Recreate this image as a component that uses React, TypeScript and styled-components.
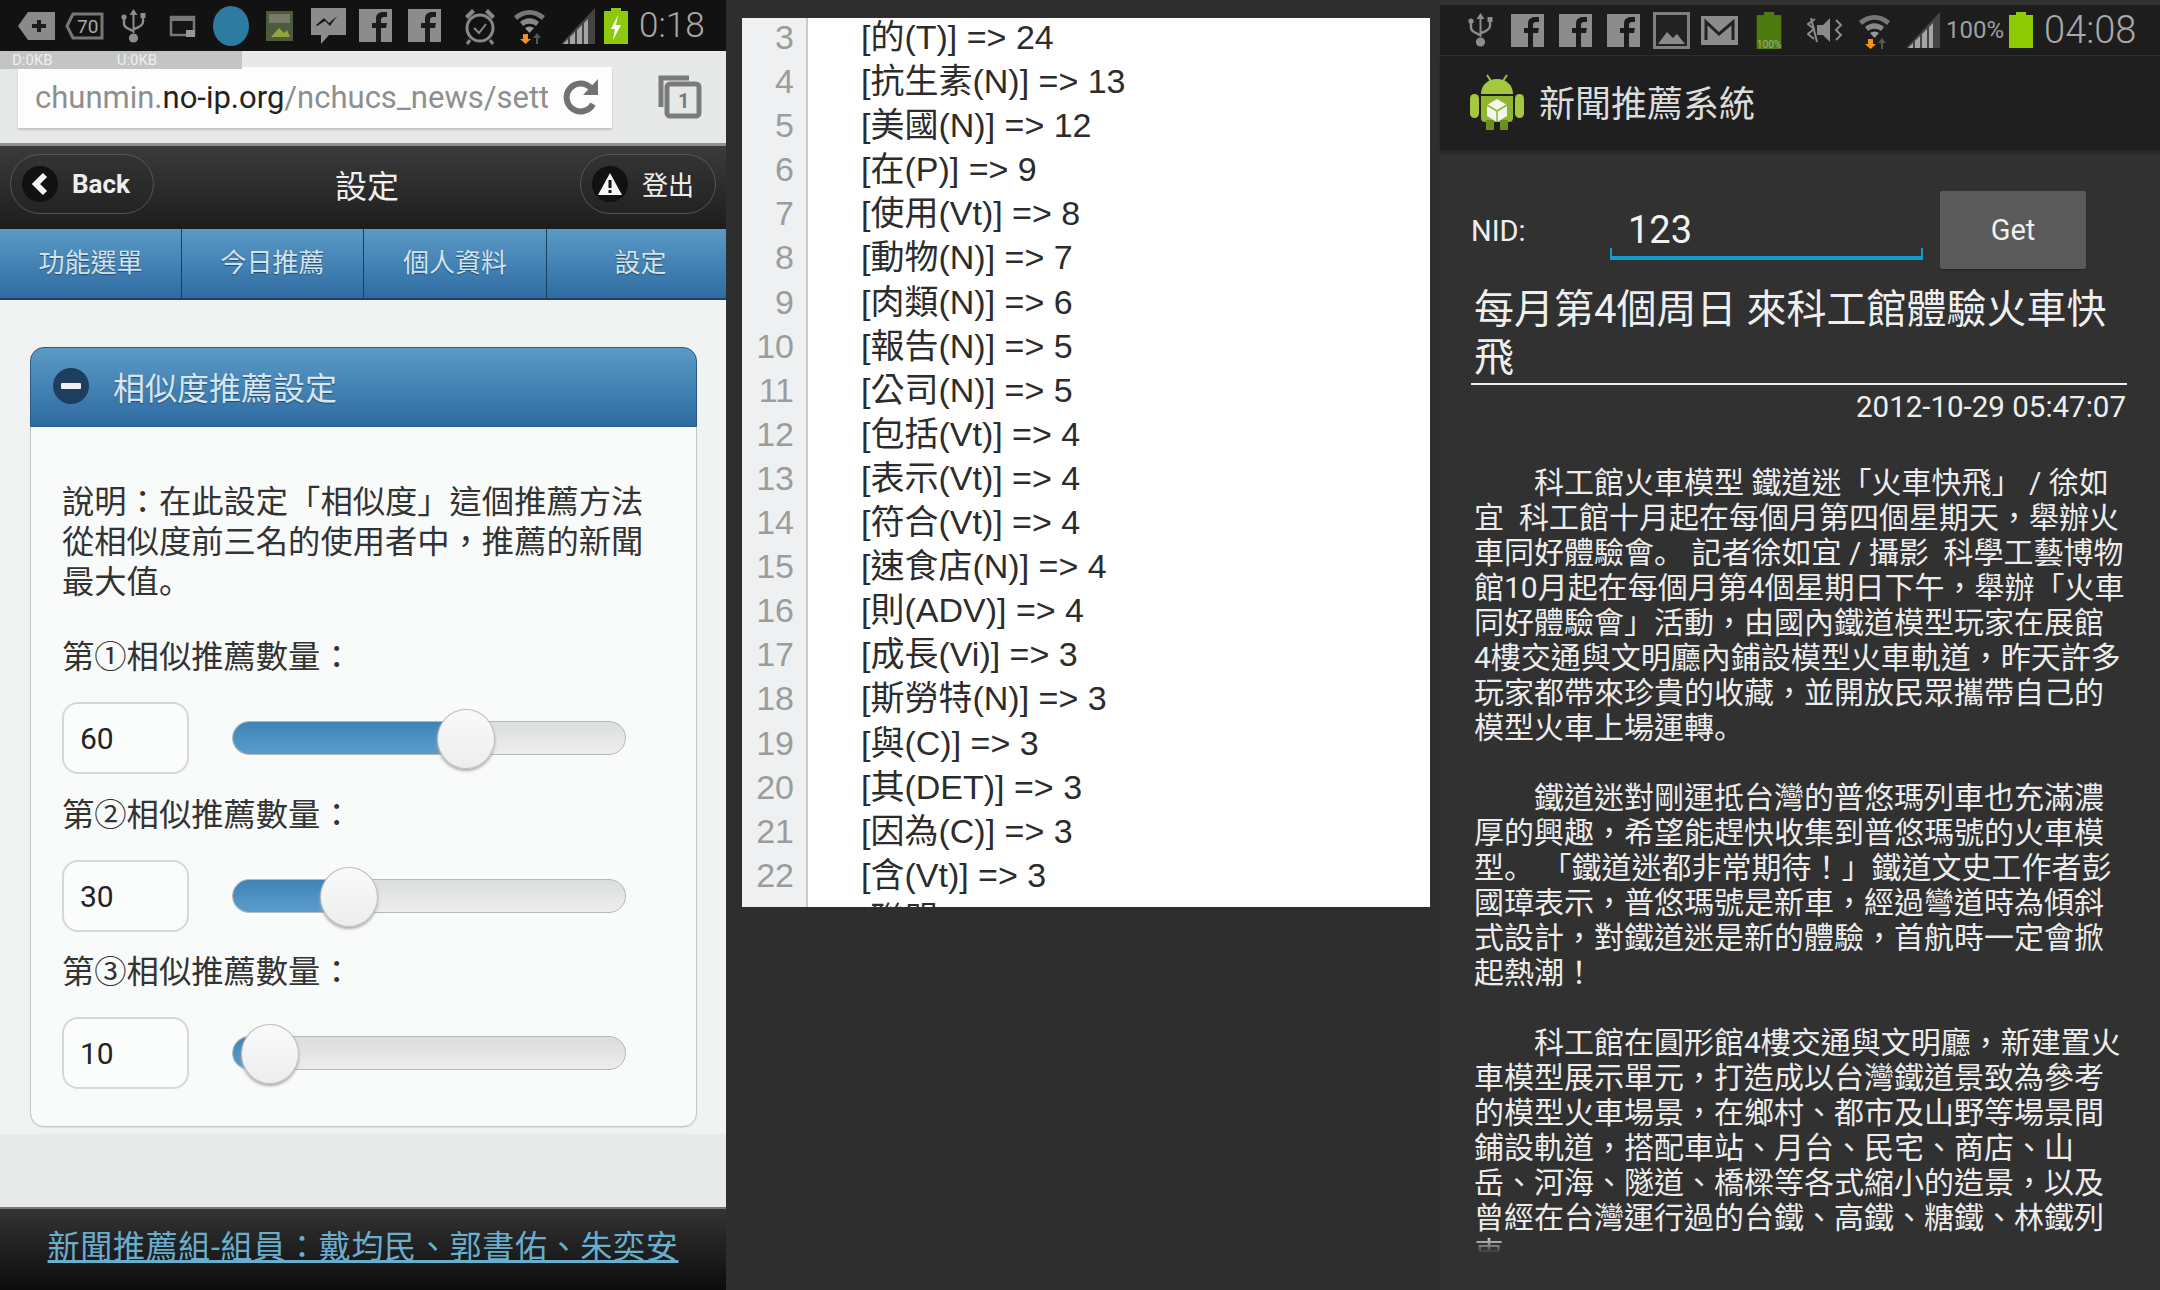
import React, { FC } from 'react';
import styled, { createGlobalStyle } from 'styled-components';

const GlobalStyle = createGlobalStyle`
    html, body {
        margin: 0;
        padding: 0;
        background: #2e2e2e;
    }
    * {
        box-sizing: border-box;
    }
`;

const fontStack = `Roboto, "Noto Sans CJK TC", sans-serif`;

const Page = styled.div`
    display: flex;
    width: 2160px;
    height: 1290px;
    overflow: hidden;
    background: #2e2e2e;
    font-family: ${fontStack};
`;

// the reference's fallback font sets the full stop low and to the left
const Stop = styled.span`
    font-family: "Noto Sans CJK SC", sans-serif;
    line-height: 0;
`;

const withStops = (text: string) =>
    text.split('\u3002').map((part, i) => (
        <React.Fragment key={i}>
            {i > 0 && <Stop>{'\u3002'}</Stop>}
            {part}
        </React.Fragment>
    ));

/* ---------- shared status bar parts ---------- */

const StatusBar = styled.div<{ $bg: string; $height: number; $pad: number }>`
    display: flex;
    align-items: center;
    flex-shrink: 0;
    height: ${(p) => p.$height}px;
    padding-left: ${(p) => p.$pad}px;
    background: ${(p) => p.$bg};
`;

const Slot = styled.span<{ $left: number }>`
    display: flex;
    align-items: center;
    margin-left: ${(p) => p.$left}px;
`;

const StatusClock = styled.span<{ $size: number; $left: number }>`
    margin-left: ${(p) => p.$left}px;
    font-size: ${(p) => p.$size}px;
    font-weight: 300;
    color: #a9a9a9;
    line-height: 1;
`;

const StatusPercent = styled.span`
    margin-left: 6px;
    font-size: 24px;
    color: #a0a0a0;
`;

const FbIcon: FC = () => (
    <svg width="33" height="33" viewBox="0 0 33 33">
        <rect width="33" height="33" fill="#8c8c8c" />
        <path d="M17 33V19h-4v-5h4v-4c0-5 3-7 7-7h4v5h-3c-2 0-3 1-3 3v3h6l-1 5h-5v14z" fill="#1b1b1b" />
    </svg>
);

const UsbIcon: FC = () => (
    <svg width="25" height="36" viewBox="0 0 25 36">
        <path d="M12.5 1l4 6h-3v17c0 1-.5 1-1 1s-1 0-1-1V7h-3z" fill="#8d8d8d" />
        <path d="M3 11v5c0 3 3 4 9 7M22 9v5c0 3-3 5-9 7" stroke="#8d8d8d" strokeWidth="2.4" fill="none" />
        <circle cx="3" cy="9" r="2.6" fill="#8d8d8d" />
        <rect x="19.5" y="5" width="5" height="5" fill="#8d8d8d" />
        <circle cx="12.5" cy="30" r="4.6" fill="#8d8d8d" />
    </svg>
);

const WifiIcon: FC = () => (
    <svg width="33" height="37" viewBox="0 0 33 37">
        <path d="M1 9C10 1 23 1 32 9l-3 4C21 6 12 6 4 13z" fill="#777" />
        <path d="M7 15c6-5 13-5 19 0l-3 4c-4-3-9-3-13 0z" fill="#888" />
        <path d="M12 21c3-2 6-2 9 0l-4.500 5z" fill="#999" />
        <path d="M10 27h5v5h3l-5.500 5L7 32h3z" fill="#f0941f" />
        <path d="M23 37v-6h-3l4-5 4 5h-3v6z" fill="#555" />
    </svg>
);

const SignalIcon: FC = () => (
    <svg width="34" height="36" viewBox="0 0 34 36">
        <path d="M0 36L34 0v36z" fill="#444" />
        <path d="M2 36l5-5v5zM9 36V29l5-5v12zM16 36V22l5-5v19zM23 36V15l4-4v25z" fill="#a5a5a5" />
    </svg>
);

const BatteryIcon: FC<{ bolt?: boolean; label?: boolean; color: string; width: number; height: number }> = ({ bolt, label, color, width, height }) => (
    <svg width={width} height={height} viewBox="0 0 24 36">
        <rect x="7" y="0" width="10" height="4" fill={color} />
        <rect x="0" y="3" width="24" height="33" fill={color} />
        {bolt && <path d="M14 7l-7 14h4l-2 11 8-15h-5z" fill="#fff" />}
        {label && <text x="0" y="35" fontSize="10" fill="#9fb07f" fontFamily="Roboto, sans-serif">100%</text>}
    </svg>
);

const LeftStatus: FC = () => (
    <StatusBar $bg="#121212" $height={51} $pad={18}>
        <svg width="37" height="28" viewBox="0 0 37 28">
            <path d="M10 0h27v28H10L0 14z" fill="#8a8a8a" />
            <path d="M19 8h4v4h5v4h-5v4h-4v-4h-5v-4h5z" fill="#1c1c1c" />
        </svg>
        <Slot $left={10}>
            <svg width="39" height="28" viewBox="0 0 39 28">
                <path d="M8 2h29v24H8L2 14z" fill="none" stroke="#777" strokeWidth="3" />
                <text x="12" y="21" fontSize="19" fill="#aaa" fontFamily="Roboto, sans-serif">70</text>
            </svg>
        </Slot>
        <Slot $left={17}><UsbIcon /></Slot>
        <Slot $left={23}>
            <svg width="27" height="30" viewBox="0 0 27 30">
                <path d="M2 6h23v18H2z" fill="#151515" stroke="#777" strokeWidth="2.500" />
                <rect x="2" y="5" width="23" height="5" fill="#777" />
                <rect x="17" y="19" width="9" height="7" fill="#999" />
            </svg>
        </Slot>
        <Slot $left={17}>
            <svg width="36" height="40" viewBox="0 0 36 40">
                <ellipse cx="18" cy="20" rx="18" ry="20" fill="#2d7ba0" />
            </svg>
        </Slot>
        <Slot $left={17}>
            <svg width="27" height="30" viewBox="0 0 27 30">
                <rect width="27" height="30" fill="#4d5a3c" />
                <rect x="3" y="3" width="21" height="9" fill="#7a7a6a" />
                <path d="M5 26l8-9 5 5 3-3 3 7z" fill="#93a33e" />
            </svg>
        </Slot>
        <Slot $left={18}>
            <svg width="35" height="36" viewBox="0 0 35 36">
                <path d="M0 0h35v27H18l-8 9v-9H0z" fill="#8c8c8c" />
                <path d="M5 17l8-7 5 5 8-7-7 10-5-5-8 5z" fill="#1b1b1b" />
            </svg>
        </Slot>
        <Slot $left={13}><FbIcon /></Slot>
        <Slot $left={16}><FbIcon /></Slot>
        <Slot $left={22}>
            <svg width="34" height="38" viewBox="0 0 34 38">
                <circle cx="17" cy="21" r="13" fill="none" stroke="#888" strokeWidth="3" />
                <path d="M11 21l5 5 7-9" fill="none" stroke="#888" strokeWidth="2" />
                <path d="M2 9l7-7 3 3-7 7zM32 9l-7-7-3 3 7 7z" fill="#888" />
                <path d="M7 33l-3 4M27 33l3 4" stroke="#888" strokeWidth="3" />
            </svg>
        </Slot>
        <Slot $left={16}><WifiIcon /></Slot>
        <Slot $left={15}><SignalIcon /></Slot>
        <Slot $left={9}><BatteryIcon bolt color="#8ec90d" width={24} height={38} /></Slot>
        <StatusClock $size={35} $left={11}>0:18</StatusClock>
    </StatusBar>
);

/* ---------- left: mobile web settings page ---------- */

const Phone = styled.div`
    display: flex;
    flex-direction: column;
    flex-shrink: 0;
    position: relative;
    width: 726px;
    height: 1290px;
    background: #eff1f0;
`;

const BrowserBar = styled.div`
    display: flex;
    align-items: center;
    height: 95px;
    padding: 6px 24px 6px 18px;
    background: #e7e8e8;
    border-bottom: 3px solid #8f9292;
`;

const NetOverlay = styled.div`
    position: absolute;
    top: 51px;
    left: 0;
    display: flex;
    width: 242px;
    height: 18px;
    padding-left: 12px;
    gap: 64px;
    background: #c3c4c4;
    color: #eee;
    font-size: 15px;
    line-height: 18px;
`;

const UrlBox = styled.div`
    display: flex;
    align-items: center;
    flex-shrink: 0;
    width: 594px;
    height: 61px;
    padding-left: 17px;
    background: #fdfdfd;
    box-shadow: 0 2px 2px #c2c2c2;
`;

const UrlText = styled.div`
    flex-shrink: 0;
    width: 513px;
    margin-right: 15px;
    overflow: hidden;
    white-space: nowrap;
    font-size: 31px;
    color: #8d8f8f;
    span {
        color: #222;
    }
`;

const TabsButton = styled.div`
    margin-left: 44px;
    line-height: 0;
`;

const AppHeader = styled.div`
    display: flex;
    align-items: center;
    justify-content: space-between;
    height: 83px;
    padding: 0 10px 8px;
    background: linear-gradient(#3b3b3b, #1d1d1d);
`;

const HeaderTitle = styled.div`
    font-size: 32px;
    color: #f0f0f0;
`;

const HeaderButton = styled.div<{ $width: number; $bold?: boolean }>`
    display: flex;
    align-items: center;
    gap: 14px;
    width: ${(p) => p.$width}px;
    height: 60px;
    padding-left: 11px;
    border-radius: 30px;
    border: 1px solid #555;
    background: linear-gradient(#333, #232323);
    font-size: 26px;
    font-weight: ${(p) => (p.$bold ? 700 : 400)};
    color: #eee;
`;

const ButtonIcon = styled.span`
    display: flex;
    align-items: center;
    justify-content: center;
    width: 36px;
    height: 36px;
    border-radius: 50%;
    background: #111;
`;

const NavBar = styled.div`
    display: grid;
    grid-template-columns: 182px 182px 183px 179px;
    height: 71px;
    border-bottom: 2px solid #23415e;
    background: linear-gradient(#5a9ac6, #2f6ca3);
`;

const NavItem = styled.div`
    display: flex;
    align-items: center;
    justify-content: center;
    padding-bottom: 6px;
    border-right: 1px solid #1d3e5c;
    font-size: 26px;
    color: #d3e3ee;
    text-shadow: 0 1px 1px #234a6c;
    &:last-child {
        padding-left: 8px;
        border-right: none;
    }
`;

const PageContent = styled.div`
    flex: 1;
    padding: 47px 29px 0 30px;
    background: linear-gradient(#f1f3f2 0, #f1f3f2 92%, #e8eaea 92%);
`;

const Collapsible = styled.div`
    border: 1px solid #c3c7c7;
    border-radius: 14px;
    background: #f9fbfa;
    box-shadow: 0 1px 1px #ddd;
`;

const CollapsibleHead = styled.div`
    display: flex;
    align-items: center;
    height: 80px;
    margin: -1px;
    padding: 0 0 2px 22px;
    gap: 24px;
    border-radius: 14px 14px 0 0;
    border: 1px solid #2b5a85;
    background: linear-gradient(#5b9ac6, #2e6ba2);
    font-size: 32px;
    color: #d6e7f2;
    text-shadow: 0 1px 1px #234a6c;
`;

const MinusBadge = styled.span`
    display: flex;
    align-items: center;
    justify-content: center;
    width: 36px;
    height: 36px;
    border-radius: 50%;
    background: #1f3d5e;
    &::after {
        content: '';
        width: 20px;
        height: 6px;
        border-radius: 1px;
        background: #f1f1f1;
    }
`;

const CollapsibleBody = styled.div`
    padding: 56px 31px 37px 31px;
    font-size: 32.3px;
    line-height: 40px;
    color: #333;
`;

const SliderLabel = styled.div<{ $top: number }>`
    margin-top: ${(p) => p.$top}px;
    white-space: pre;
`;

const SliderRow = styled.div`
    display: flex;
    align-items: center;
    margin-top: 25px;
`;

const NumberBox = styled.div`
    display: flex;
    align-items: center;
    width: 127px;
    height: 72px;
    padding: 2px 0 0 16px;
    border: 2px solid #d6d8d8;
    border-radius: 16px;
    background: #fbfcfc;
    font-size: 30px;
    color: #222;
`;

const Track = styled.div`
    position: relative;
    width: 394px;
    height: 34px;
    margin-left: 43px;
    border: 1px solid #b5b8b8;
    border-radius: 17px;
    background: linear-gradient(#dcdddd, #ededed);
`;

const TrackFill = styled.div`
    height: 100%;
    border-radius: 17px 0 0 17px;
    background: linear-gradient(#3f83b7, #5a9dcc);
`;

const Thumb = styled.div`
    position: absolute;
    top: -13px;
    width: 58px;
    height: 60px;
    margin-left: -31px;
    border: 1px solid #bcbfbf;
    border-radius: 50%;
    background: linear-gradient(#fafafa, #eceded);
    box-shadow: 0 2px 3px #aaa;
`;

const Footer = styled.div`
    display: flex;
    align-items: flex-start;
    justify-content: center;
    height: 83px;
    padding-top: 12px;
    border-top: 2px solid #777;
    background: linear-gradient(#333, #0c0c0c);
    font-size: 32px;
    letter-spacing: 0.7px;
    color: #6aaecd;
    text-decoration: underline;
    white-space: pre;
`;

const sliders = [
    { label: '第①相似推薦數量\uFF1A', value: 60, top: 35 },
    { label: '第②相似推薦數量\uFF1A', value: 30, top: 21 },
    { label: '第③相似推薦數量\uFF1A', value: 10, top: 20 },
];

const SettingsPhone: FC = () => (
    <Phone>
        <LeftStatus />
        <BrowserBar>
            <UrlBox>
                <UrlText>chunmin.<span>no-ip.org</span>/nchucs_news/settings</UrlText>
                <svg width="36" height="40" viewBox="0 0 36 40">
                    <path d="M30 27a14 14 0 1 1-2-16" fill="none" stroke="#707272" strokeWidth="6" />
                    <path d="M35 2v16H20z" fill="#707272" />
                </svg>
            </UrlBox>
            <TabsButton>
                <svg width="46" height="44" viewBox="0 0 46 44">
                    <path d="M5 32V3h28" fill="none" stroke="#7a7c7c" strokeWidth="5" />
                    <rect x="11" y="9" width="32" height="32" rx="3" fill="#e7e8e8" stroke="#7a7c7c" strokeWidth="5" />
                    <text x="22" y="33" fontSize="20" fontWeight="700" fill="#7a7c7c" fontFamily="Roboto, sans-serif">1</text>
                </svg>
            </TabsButton>
        </BrowserBar>
        <NetOverlay><span>D:0KB</span><span>U:0KB</span></NetOverlay>
        <AppHeader>
            <HeaderButton $width={144} $bold>
                <ButtonIcon>
                    <svg width="18" height="24" viewBox="0 0 18 24">
                        <path d="M14 3L5 12l9 9" fill="none" stroke="#f4f4f4" strokeWidth="6" />
                    </svg>
                </ButtonIcon>
                Back
            </HeaderButton>
            <HeaderTitle>設定</HeaderTitle>
            <HeaderButton $width={136}>
                <ButtonIcon>
                    <svg width="26" height="24" viewBox="0 0 26 24">
                        <path d="M13 1l12 22H1z" fill="#f4f4f4" />
                        <rect x="11.500" y="8" width="3" height="8" fill="#111" />
                        <rect x="11.500" y="18" width="3" height="3" fill="#111" />
                    </svg>
                </ButtonIcon>
                登出
            </HeaderButton>
        </AppHeader>
        <NavBar>
            <NavItem>功能選單</NavItem>
            <NavItem>今日推薦</NavItem>
            <NavItem>個人資料</NavItem>
            <NavItem>設定</NavItem>
        </NavBar>
        <PageContent>
            <Collapsible>
                <CollapsibleHead><MinusBadge />相似度推薦設定</CollapsibleHead>
                <CollapsibleBody>
                    <div>
                        {'說明\uFF1A在此設定「相似度」這個推薦方法'}<br />
                        {'從相似度前三名的使用者中\uFF0C推薦的新聞'}<br />
                        {withStops('最大值。')}
                    </div>
                    {sliders.map((s) => (
                        <React.Fragment key={s.value}>
                            <SliderLabel $top={s.top}>{s.label}</SliderLabel>
                            <SliderRow>
                                <NumberBox>{s.value}</NumberBox>
                                <Track>
                                    <TrackFill style={{ width: `${s.value}%` }} />
                                    <Thumb style={{ left: `${s.value}%` }} />
                                </Track>
                            </SliderRow>
                        </React.Fragment>
                    ))}
                </CollapsibleBody>
            </Collapsible>
        </PageContent>
        <Footer>{'新聞推薦組-組員\uFF1A戴均民、郭書佑、朱奕安'}</Footer>
    </Phone>
);

/* ---------- middle: term count listing ---------- */

const Listing = styled.div`
    flex-shrink: 0;
    width: 688px;
    height: 889px;
    margin: 18px 0 0 16px;
    overflow: hidden;
    background: #fff;
    font-family: "Liberation Sans", "Noto Sans CJK TC", sans-serif;
`;

const ListingRows = styled.div`
    margin-top: -3px;
`;

const ListingRow = styled.div`
    display: flex;
    height: 44.1px;
    line-height: 44.1px;
`;

const LineNumber = styled.div`
    width: 66px;
    padding-right: 12px;
    flex-shrink: 0;
    text-align: right;
    background: #eef0f1;
    border-right: 2px solid #c9cbcb;
    font-size: 34px;
    color: #9b9d9d;
`;

const Term = styled.div`
    padding-left: 53px;
    font-size: 34px;
    color: #2c2c2c;
    white-space: pre;
`;

const terms = [
    '[的(T)] => 24',
    '[抗生素(N)] => 13',
    '[美國(N)] => 12',
    '[在(P)] => 9',
    '[使用(Vt)] => 8',
    '[動物(N)] => 7',
    '[肉類(N)] => 6',
    '[報告(N)] => 5',
    '[公司(N)] => 5',
    '[包括(Vt)] => 4',
    '[表示(Vt)] => 4',
    '[符合(Vt)] => 4',
    '[速食店(N)] => 4',
    '[則(ADV)] => 4',
    '[成長(Vi)] => 3',
    '[斯勞特(N)] => 3',
    '[與(C)] => 3',
    '[其(DET)] => 3',
    '[因為(C)] => 3',
    '[含(Vt)] => 3',
    '[聯盟(N)] => 3',
];

/* ---------- right: native news app ---------- */

const NewsApp = styled.div`
    display: flex;
    flex-direction: column;
    flex-shrink: 0;
    position: relative;
    width: 720px;
    height: 1290px;
    margin-left: 10px;
    padding-top: 5px;
    background: #313131;
`;

const ActionBar = styled.div`
    display: flex;
    align-items: center;
    gap: 15px;
    height: 95px;
    padding: 0 0 4px 30px;
    border-top: 1px solid #2e2e2e;
    background: #1f1f1f;
    box-shadow: 0 3px 3px #262626;
    font-size: 36px;
    color: #dcdcdc;
`;

const FetchRow = styled.div`
    display: flex;
    align-items: flex-start;
    margin-top: 41px;
    padding-left: 31px;
`;

const NidLabel = styled.div`
    width: 139px;
    margin-top: 25px;
    font-size: 29px;
    line-height: 30px;
    color: #eee;
`;

const NidInput = styled.div`
    position: relative;
    width: 313px;
    height: 69px;
    padding: 17px 0 0 18px;
    border-bottom: 4px solid #139bcb;
    font-size: 38px;
    line-height: 44px;
    color: #f2f2f2;
    &::before, &::after {
        content: '';
        position: absolute;
        bottom: 0;
        width: 2px;
        height: 8px;
        background: #139bcb;
    }
    &::before {
        left: 0;
    }
    &::after {
        right: 0;
    }
`;

const GetButton = styled.div`
    display: flex;
    align-items: center;
    justify-content: center;
    width: 146px;
    height: 78px;
    margin-left: 17px;
    background: #5a5a5a;
    border-radius: 2px;
    box-shadow: 0 1px 1px #222;
    font-size: 29px;
    color: #f0f0f0;
`;

const Article = styled.div`
    padding: 17px 33px 0 31px;
`;

const Headline = styled.div`
    padding: 0 0 1px 3px;
    border-bottom: 2px solid #f2f2f2;
    font-size: 40px;
    line-height: 48px;
    color: #efefef;
    white-space: pre;
`;

const Timestamp = styled.div`
    margin-top: 3px;
    padding-right: 1px;
    text-align: right;
    font-size: 29.5px;
    line-height: 38px;
    color: #efefef;
`;

const BodyClip = styled.div`
    position: relative;
    height: 788px;
    margin-top: 39px;
    overflow: hidden;
    &::after {
        content: '';
        position: absolute;
        left: 0;
        right: 0;
        bottom: 0;
        height: 14px;
        background: linear-gradient(rgba(49, 49, 49, 0.2), #313131);
    }
`;

const BodyLine = styled.div<{ $indent?: boolean }>`
    height: 35px;
    padding-left: ${(p) => (p.$indent ? 63 : 3)}px;
    font-size: 30px;
    line-height: 35px;
    color: #ececec;
    white-space: pre;
`;

const article = [
    '>科工館火車模型 鐵道迷「火車快飛」 / 徐如',
    '宜  科工館十月起在每個月第四個星期天\uFF0C舉辦火',
    '車同好體驗會。 記者徐如宜 / 攝影  科學工藝博物',
    '館10月起在每個月第4個星期日下午\uFF0C舉辦「火車',
    '同好體驗會」活動\uFF0C由國內鐵道模型玩家在展館',
    '4樓交通與文明廳內鋪設模型火車軌道\uFF0C昨天許多',
    '玩家都帶來珍貴的收藏\uFF0C並開放民眾攜帶自己的',
    '模型火車上場運轉。',
    '',
    '>鐵道迷對剛運抵台灣的普悠瑪列車也充滿濃',
    '厚的興趣\uFF0C希望能趕快收集到普悠瑪號的火車模',
    '型。 「鐵道迷都非常期待\uFF01」鐵道文史工作者彭',
    '國璋表示\uFF0C普悠瑪號是新車\uFF0C經過彎道時為傾斜',
    '式設計\uFF0C對鐵道迷是新的體驗\uFF0C首航時一定會掀',
    '起熱潮\uFF01',
    '',
    '>科工館在圓形館4樓交通與文明廳\uFF0C新建置火',
    '車模型展示單元\uFF0C打造成以台灣鐵道景致為參考',
    '的模型火車場景\uFF0C在鄉村、都市及山野等場景間',
    '鋪設軌道\uFF0C搭配車站、月台、民宅、商店、山',
    '岳、河海、隧道、橋樑等各式縮小的造景\uFF0C以及',
    '曾經在台灣運行過的台鐵、高鐵、糖鐵、林鐵列',
    '車',
];

const RightStatus: FC = () => (
    <StatusBar $bg="#1d1d1d" $height={50} $pad={28}>
        <UsbIcon />
        <Slot $left={18}><FbIcon /></Slot>
        <Slot $left={15}><FbIcon /></Slot>
        <Slot $left={15}><FbIcon /></Slot>
        <Slot $left={13}>
            <svg width="37" height="37" viewBox="0 0 37 37">
                <rect x="1.500" y="1.500" width="34" height="34" fill="#222" stroke="#808080" strokeWidth="3" />
                <path d="M5 32l9-12 6 6 4-4 8 10z" fill="#8a8a8a" />
            </svg>
        </Slot>
        <Slot $left={11}>
            <svg width="37" height="29" viewBox="0 0 37 29">
                <rect width="37" height="29" fill="#8c8c8c" />
                <path d="M5 24V6l13 12L32 6v18" fill="none" stroke="#222" strokeWidth="3" />
            </svg>
        </Slot>
        <Slot $left={18}><BatteryIcon label color="#4f7a10" width={26} height={37} /></Slot>
        <Slot $left={25}>
            <svg width="38" height="28" viewBox="0 0 38 28">
                <path d="M10 9h6l7-7v24l-7-7h-6z" fill="#8a8a8a" />
                <path d="M4 2l6 24M8 3L1 8l6 5-6 5 6 5M29 4l5 5-5 5 5 5-5 5" fill="none" stroke="#8a8a8a" strokeWidth="2" />
            </svg>
        </Slot>
        <Slot $left={13}><WifiIcon /></Slot>
        <Slot $left={15}><SignalIcon /></Slot>
        <StatusPercent>100%</StatusPercent>
        <Slot $left={5}><BatteryIcon color="#8ecb05" width={24} height={36} /></Slot>
        <StatusClock $size={38} $left={11}>04:08</StatusClock>
    </StatusBar>
);

const NewsReader: FC = () => (
    <NewsApp>
        <RightStatus />
        <ActionBar>
            <svg width="54" height="58" viewBox="0 0 54 58">
                <path d="M17 3l4 6M37 3l-4 6" stroke="#9cc43a" strokeWidth="2" />
                <path d="M11 22c0-9 7-15 16-15s16 6 16 15z" fill="#a4c83f" />
                <path d="M11 24h32v22c0 3-2 4-4 4H15c-2 0-4-1-4-4z" fill="#8fb62f" />
                <rect x="0" y="22" width="9" height="24" rx="4.500" fill="#a4c83f" />
                <rect x="45" y="22" width="9" height="24" rx="4.500" fill="#a4c83f" />
                <rect x="16" y="48" width="8" height="10" fill="#6d8f22" />
                <rect x="30" y="48" width="8" height="10" fill="#6d8f22" />
                <path d="M27 27l10 6v11l-10 6-10-6V33z" fill="#f4f4ee" />
                <path d="M27 39l10-6M27 39l-10-6M27 39v11" stroke="#8fb62f" strokeWidth="1.500" />
            </svg>
            新聞推薦系統
        </ActionBar>
        <FetchRow>
            <NidLabel>NID:</NidLabel>
            <NidInput>123</NidInput>
            <GetButton>Get</GetButton>
        </FetchRow>
        <Article>
            <Headline>每月第4個周日 來科工館體驗火車快{'\n'}飛</Headline>
            <Timestamp>2012-10-29 05:47:07</Timestamp>
            <BodyClip>
                {article.map((line, i) => (
                    <BodyLine key={i} $indent={line.startsWith('>')}>{withStops(line.replace('>', ''))}</BodyLine>
                ))}
            </BodyClip>
        </Article>
    </NewsApp>
);

const App: FC = () => (
    <Page>
        <GlobalStyle />
        <SettingsPhone />
        <Listing>
            <ListingRows>
                {terms.map((term, i) => (
                    <ListingRow key={term}>
                        <LineNumber>{i + 3}</LineNumber>
                        <Term>{term}</Term>
                    </ListingRow>
                ))}
            </ListingRows>
        </Listing>
        <NewsReader />
    </Page>
);

export default App;
